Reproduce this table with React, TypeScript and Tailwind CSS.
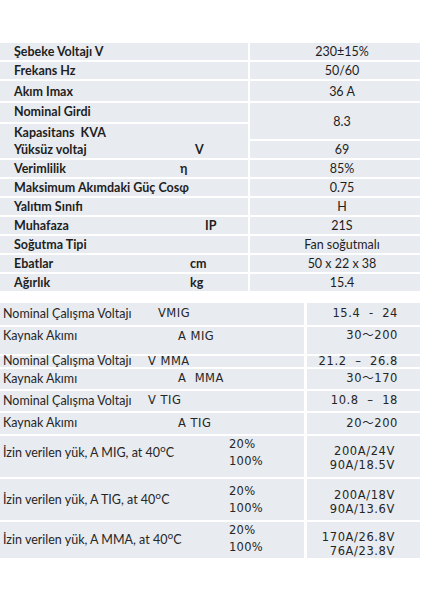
import React from "react";

const bg = "bg-[#e8ebf0]";

type TopRow = { label: string; label2?: string; unit?: string; ux?: number; value: string; h: number };

const topRows: TopRow[] = [
  { label: "Şebeke Voltajı V", value: "230±15%", h: 17 },
  { label: "Frekans Hz", value: "50/60", h: 17 },
  { label: "Akım Imax", value: "36 A", h: 20 },
  { label: "Nominal Girdi", label2: "Kapasitans  KVA", value: "8.3", h: 36 },
  { label: "Yüksüz voltaj", unit: "V", ux: 195, value: "69", h: 17 },
  { label: "Verimlilik", unit: "η", ux: 180, value: "85%", h: 17 },
  { label: "Maksimum Akımdaki Güç Cosφ", value: "0.75", h: 17 },
  { label: "Yalıtım Sınıfı", value: "H", h: 17 },
  { label: "Muhafaza", unit: "IP", ux: 205, value: "21S", h: 17 },
  { label: "Soğutma Tipi", value: "Fan soğutmalı", h: 17 },
  { label: "Ebatlar", unit: "cm", ux: 190, value: "50 x 22 x 38", h: 17 },
  { label: "Ağırlık", unit: "kg", ux: 190, value: "15.4", h: 17 },
];

const mono = { fontFamily: '"DejaVu Sans", "Noto Sans CJK JP", sans-serif' };

function Label({ text, unit, ux, bold }: { text: string; unit?: string; ux?: number; bold?: boolean }) {
  return (
    <div className="flex items-center whitespace-pre">
      <span className={bold ? "w-[176px] pl-[14px]" : "w-[148px] pl-[3px]"}>{text}</span>
      {unit && (
        <span
          className={bold ? "" : "text-[11.5px] tracking-[0.5px]"}
          style={{ marginLeft: (ux ?? 0) - (bold ? 176 : 148), ...(bold ? {} : mono) }}
        >
          {unit}
        </span>
      )}
    </div>
  );
}

function TopTable() {
  return (
    <div className="flex flex-col gap-[2px] font-bold text-[12.5px] text-[#1e1e1e]" style={{ fontFamily: "Lato, sans-serif" }}>
      {topRows.map((r) => (
        <div key={r.label} className="flex gap-[2px]" style={{ height: r.h }}>
          {r.label2 ? (
            <div className="w-[248px] flex flex-col gap-[2px]">
              <div className={`${bg} flex-1 flex items-center`}>
                <Label text={r.label} bold />
              </div>
              <div className={`${bg} flex-1 flex items-center`}>
                <Label text={r.label2} bold />
              </div>
            </div>
          ) : (
            <div className={`${bg} w-[248px] flex items-center pt-[2px]`}>
              <Label text={r.label} unit={r.unit} ux={r.ux} bold />
            </div>
          )}
          <div className={`${bg} w-[170px] flex items-center justify-center pl-[14px] pt-[2px] font-normal`}>
            {r.value}
          </div>
        </div>
      ))}
    </div>
  );
}

type Pair = { label: string; unit: string; ux: number; value: string; h: number; top?: boolean };

const groups: Pair[][] = [
  [
    { label: "Nominal Çalışma Voltajı", unit: "VMIG", ux: 158, value: "15.4  -  24", h: 22 },
    { label: "Kaynak Akımı", unit: "A MIG", ux: 178, value: "30～200", h: 27, top: true },
  ],
  [
    { label: "Nominal Çalışma Voltajı", unit: "V MMA", ux: 148, value: "21.2  –  26.8", h: 11 },
    { label: "Kaynak Akımı", unit: "A  MMA", ux: 178, value: "30～170", h: 20 },
  ],
  [
    { label: "Nominal Çalışma Voltajı", unit: "V TIG", ux: 148, value: "10.8  –  18", h: 20 },
    { label: "Kaynak Akımı", unit: "A TIG", ux: 178, value: "20～200", h: 21 },
  ],
];

// pt values: label, percent column, value column
const loads = [
  { mode: "A MIG", v1: "200A/24V", v2: "90A/18.5V", h: 41, lp: 9, pp: 0, vp: 8 },
  { mode: "A TIG", v1: "200A/18V", v2: "90A/13.6V", h: 41, lp: 13, pp: 4, vp: 9 },
  { mode: "A MMA", v1: "170A/26.8V", v2: " 76A/23.8V", h: 36, lp: 10, pp: 0, vp: 8 },
];

function SecondTable() {
  return (
    <div className="flex flex-col gap-[2px] text-[12.5px] text-[#262626]" style={{ fontFamily: "Lato, sans-serif" }}>
      {groups.map((g, i) => (
        <div key={i} className="flex flex-col gap-[2px]">
          {g.map((p) => (
            <div key={p.unit} className="flex gap-[3px]" style={{ height: p.h }}>
              <div className={`${bg} w-[304px] flex ${p.top ? "items-start" : "items-center"}`}>
                <Label text={p.label} unit={p.unit} ux={p.ux} />
              </div>
              <div
                className={`${bg} w-[113px] flex ${p.top ? "items-start" : "items-center"} justify-end pr-[22px] text-[11.5px] tracking-[0.6px] whitespace-pre`}
                style={mono}
              >
                {p.value}
              </div>
            </div>
          ))}
        </div>
      ))}
      {loads.map((l) => (
        <div key={l.mode} className="flex gap-[3px]" style={{ height: l.h }}>
          <div className={`${bg} w-[304px] flex items-start`}>
            <span className="w-[229px] pl-[3px] leading-[15px] whitespace-nowrap" style={{ paddingTop: l.lp }}>
              İzin verilen yük, {l.mode}, at 40<sup className="text-[9.5px] -top-[5px]" style={mono}>o</sup>C
            </span>
            <div className="flex flex-col text-[11.5px] leading-[17px] tracking-[0.3px]" style={{ ...mono, paddingTop: l.pp }}>
              <span>20%</span>
              <span>100%</span>
            </div>
          </div>
          <div
            className={`${bg} w-[113px] flex flex-col items-end pr-[25px] text-[11.5px] leading-[14px] tracking-[0.6px] whitespace-pre`}
            style={{ ...mono, paddingTop: l.vp }}
          >
            <span>{l.v1}</span>
            <span>{l.v2}</span>
          </div>
        </div>
      ))}
    </div>
  );
}

export default function App() {
  return (
    <div className="w-[424px] h-[600px] bg-white overflow-hidden">
      <div className="pt-[43px]">
        <TopTable />
      </div>
      <div className="pt-[12px]">
        <SecondTable />
      </div>
    </div>
  );
}
